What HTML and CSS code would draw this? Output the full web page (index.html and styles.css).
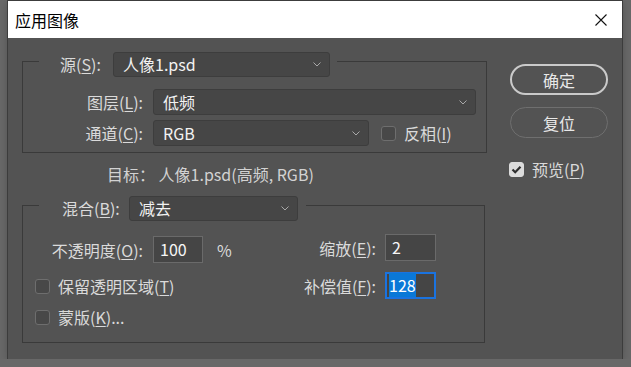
FILE: index.html
```html
<!DOCTYPE html>
<html lang="zh-CN">
<head>
  <meta charset="UTF-8" />
  <title>应用图像</title>
  <link rel="stylesheet" href="styles.css">
</head>
<body>
  <div class="dialog">
    <div class="titlebar">
      <span class="title">应用图像</span>
      <svg class="close" width="12" height="12" viewBox="0 0 12 12">
        <path d="M0.5 0.5 L11.5 11.5 M11.5 0.5 L0.5 11.5" stroke="#111" stroke-width="1.1" fill="none" />
      </svg>
    </div>

    <div class="content">
      <div class="main">
        <!-- SOURCE -->
        <div class="group source">
          <div class="group-head">
            <span class="head-label">源(<u>S</u>):</span>
            <div class="select w-source">
              <span>人像1.psd</span>
              <svg class="chev" width="8" height="5" viewBox="0 0 8 5"><polyline points="0.5,0.5 4,4 7.5,0.5" /></svg>
            </div>
          </div>

          <div class="row first">
            <span class="label">图层(<u>L</u>):</span>
            <div class="select w-layer">
              <span>低频</span>
              <svg class="chev" width="8" height="5" viewBox="0 0 8 5"><polyline points="0.5,0.5 4,4 7.5,0.5" /></svg>
            </div>
          </div>

          <div class="row">
            <span class="label">通道(<u>C</u>):</span>
            <div class="select w-channel">
              <span>RGB</span>
              <svg class="chev" width="8" height="5" viewBox="0 0 8 5"><polyline points="0.5,0.5 4,4 7.5,0.5" /></svg>
            </div>
            <span class="check invert"></span>
            <span class="check-label">反相(<u>I</u>)</span>
          </div>
        </div>

        <div class="target">
          <span class="target-key">目标：</span>
          <span>人像1.psd(高频, RGB)</span>
        </div>

        <!-- BLEND -->
        <div class="group blend">
          <div class="group-head">
            <span class="head-label">混合(<u>B</u>):</span>
            <div class="select w-blend">
              <span>减去</span>
              <svg class="chev" width="8" height="5" viewBox="0 0 8 5"><polyline points="0.5,0.5 4,4 7.5,0.5" /></svg>
            </div>
          </div>

          <div class="blend-body">
            <div class="blend-left">
              <div class="row">
                <span class="label">不透明度(<u>O</u>):</span>
                <div class="input w-opacity">100</div>
                <span class="unit">%</span>
              </div>
              <div class="check-row keep">
                <span class="check"></span>
                <span class="check-label">保留透明区域(<u>T</u>)</span>
              </div>
              <div class="check-row mask">
                <span class="check"></span>
                <span class="check-label">蒙版(<u>K</u>)...</span>
              </div>
            </div>

            <div class="blend-right">
              <div class="row">
                <span class="label small">缩放(<u>E</u>):</span>
                <div class="input w-small">2</div>
              </div>
              <div class="row offset">
                <span class="label small">补偿值(<u>F</u>):</span>
                <div class="input w-small focus"><span class="sel">128</span></div>
              </div>
            </div>
          </div>
        </div>
      </div>

      <div class="side">
        <button class="btn primary">确定</button>
        <button class="btn">复位</button>
        <div class="check-row preview">
          <span class="check checked">
            <svg width="11" height="9" viewBox="0 0 11 9"><polyline points="1.5,4.5 4.2,7.2 9.5,1.8" /></svg>
          </span>
          <span class="check-label">预览(<u>P</u>)</span>
        </div>
      </div>
    </div>
  </div>
</body>
</html>
```

FILE: styles.css
```css
body {
  margin: 0;
  background: #686868;
  font-family: "Noto Sans CJK SC", "Noto Sans", sans-serif;
  font-size: 16px;
}
u { text-decoration-thickness: 1px; text-underline-offset: 2px; }

.dialog {
  width: 614px;
  height: 358px;
  margin: 1px 0 0 8px;
  background: #535353;
  box-shadow: 0 0 0 1px #3c3c3c, 0 2px 8px rgba(0,0,0,0.25);
}
.titlebar {
  height: 37px;
  background: #fff;
  display: flex;
  align-items: center;
  justify-content: space-between;
  padding: 0 15px 0 7px;
}
.title { color: #000; line-height: 20px; }
.close { margin-top: 1px; }

.content { display: flex; }
.main { padding-left: 14px; }

.group {
  width: 463px;
  border: 1px solid #3a3a3a;
}
.source { margin-top: 23px; padding-bottom: 6px; }
.blend { margin-top: 21px; height: 138px; box-sizing: border-box; }

.group-head {
  display: flex;
  align-items: center;
  width: max-content;
  margin: -10px 0 0 16px;
  padding: 0 7px 0 21px;
  background: #535353;
}
.blend .group-head { padding-left: 23px; padding-right: 8px; }
.head-label { color: #dadada; line-height: 25px; width: 53px; white-space: nowrap; }
.blend .head-label { width: 67px; }

.select {
  display: flex;
  align-items: center;
  justify-content: space-between;
  box-sizing: border-box;
  height: 25px;
  padding: 0 8px 0 9px;
  background: #464646;
  border: 1px solid #3d3d3d;
  border-radius: 3px;
  color: #f2f2f2;
  line-height: 23px;
}
.chev { fill: none; stroke: #a8a8a8; stroke-width: 1; }
.w-source { width: 217px; }
.w-layer { width: 323px; height: 26px; }
.w-channel { width: 216px; height: 26px; }
.w-blend { width: 169px; }

.row { display: flex; align-items: center; }
.source .row.first { margin-top: 12px; }
.source .row + .row { margin-top: 5px; }
.label {
  width: 120px;
  margin-right: 10px;
  text-align: right;
  color: #dadada;
  white-space: nowrap;
  line-height: 20px;
}
.label.small { width: 84px; margin-right: 9px; }

.check {
  display: inline-flex;
  align-items: center;
  justify-content: center;
  box-sizing: border-box;
  width: 15px;
  height: 15px;
  background: #484848;
  border: 1px solid #6e6e6e;
  border-radius: 3px;
  flex: none;
}
.check.invert { margin-left: 12px; }
.check.checked { background: #dcdcdc; border-color: #dcdcdc; }
.check.checked svg { fill: none; stroke: #2e2e2e; stroke-width: 2.2; }
.check-label { margin-left: 8px; color: #dadada; line-height: 20px; white-space: nowrap; }

.target {
  margin: 11px 0 0 85px;
  color: #d2d2d2;
  line-height: 20px;
}

.blend-body { display: flex; }
.blend-left { width: 269px; margin-top: 15px; }
.blend-right { margin-top: 13px; }

.input {
  box-sizing: border-box;
  height: 27px;
  padding: 0 6px;
  background: #454545;
  border: 1px solid #6a6a6a;
  color: #f6f6f6;
  line-height: 25px;
}
.w-opacity { width: 50px; }
.w-small { width: 51px; }
.unit { margin-left: 14px; color: #dadada; }
.input.focus { border: 2px solid #1a73e0; padding: 0 2px; line-height: 23px; }
.sel { background: #0a78d7; color: #fff; }
.row.offset { margin-top: 11px; }

.check-row { display: flex; align-items: center; height: 20px; }
.check-row .check { margin-left: 12px; }
.keep { margin-top: 13px; }
.mask { margin-top: 11px; }

.side {
  margin-left: 23px;
  padding-top: 26px;
  display: flex;
  flex-direction: column;
  align-items: flex-start;
}
.btn {
  width: 98px;
  height: 31px;
  border: 1px solid #6f6f6f;
  border-radius: 16px;
  background: #535353;
  color: #e8e8e8;
  font-family: inherit;
  font-size: 16px;
  line-height: 20px;
  padding: 0;
}
.btn.primary { border: 2px solid #cacaca; }
.btn + .btn { margin-top: 12px; }
.preview { margin-top: 21px; }
.preview .check { margin-left: -1px; }
```
